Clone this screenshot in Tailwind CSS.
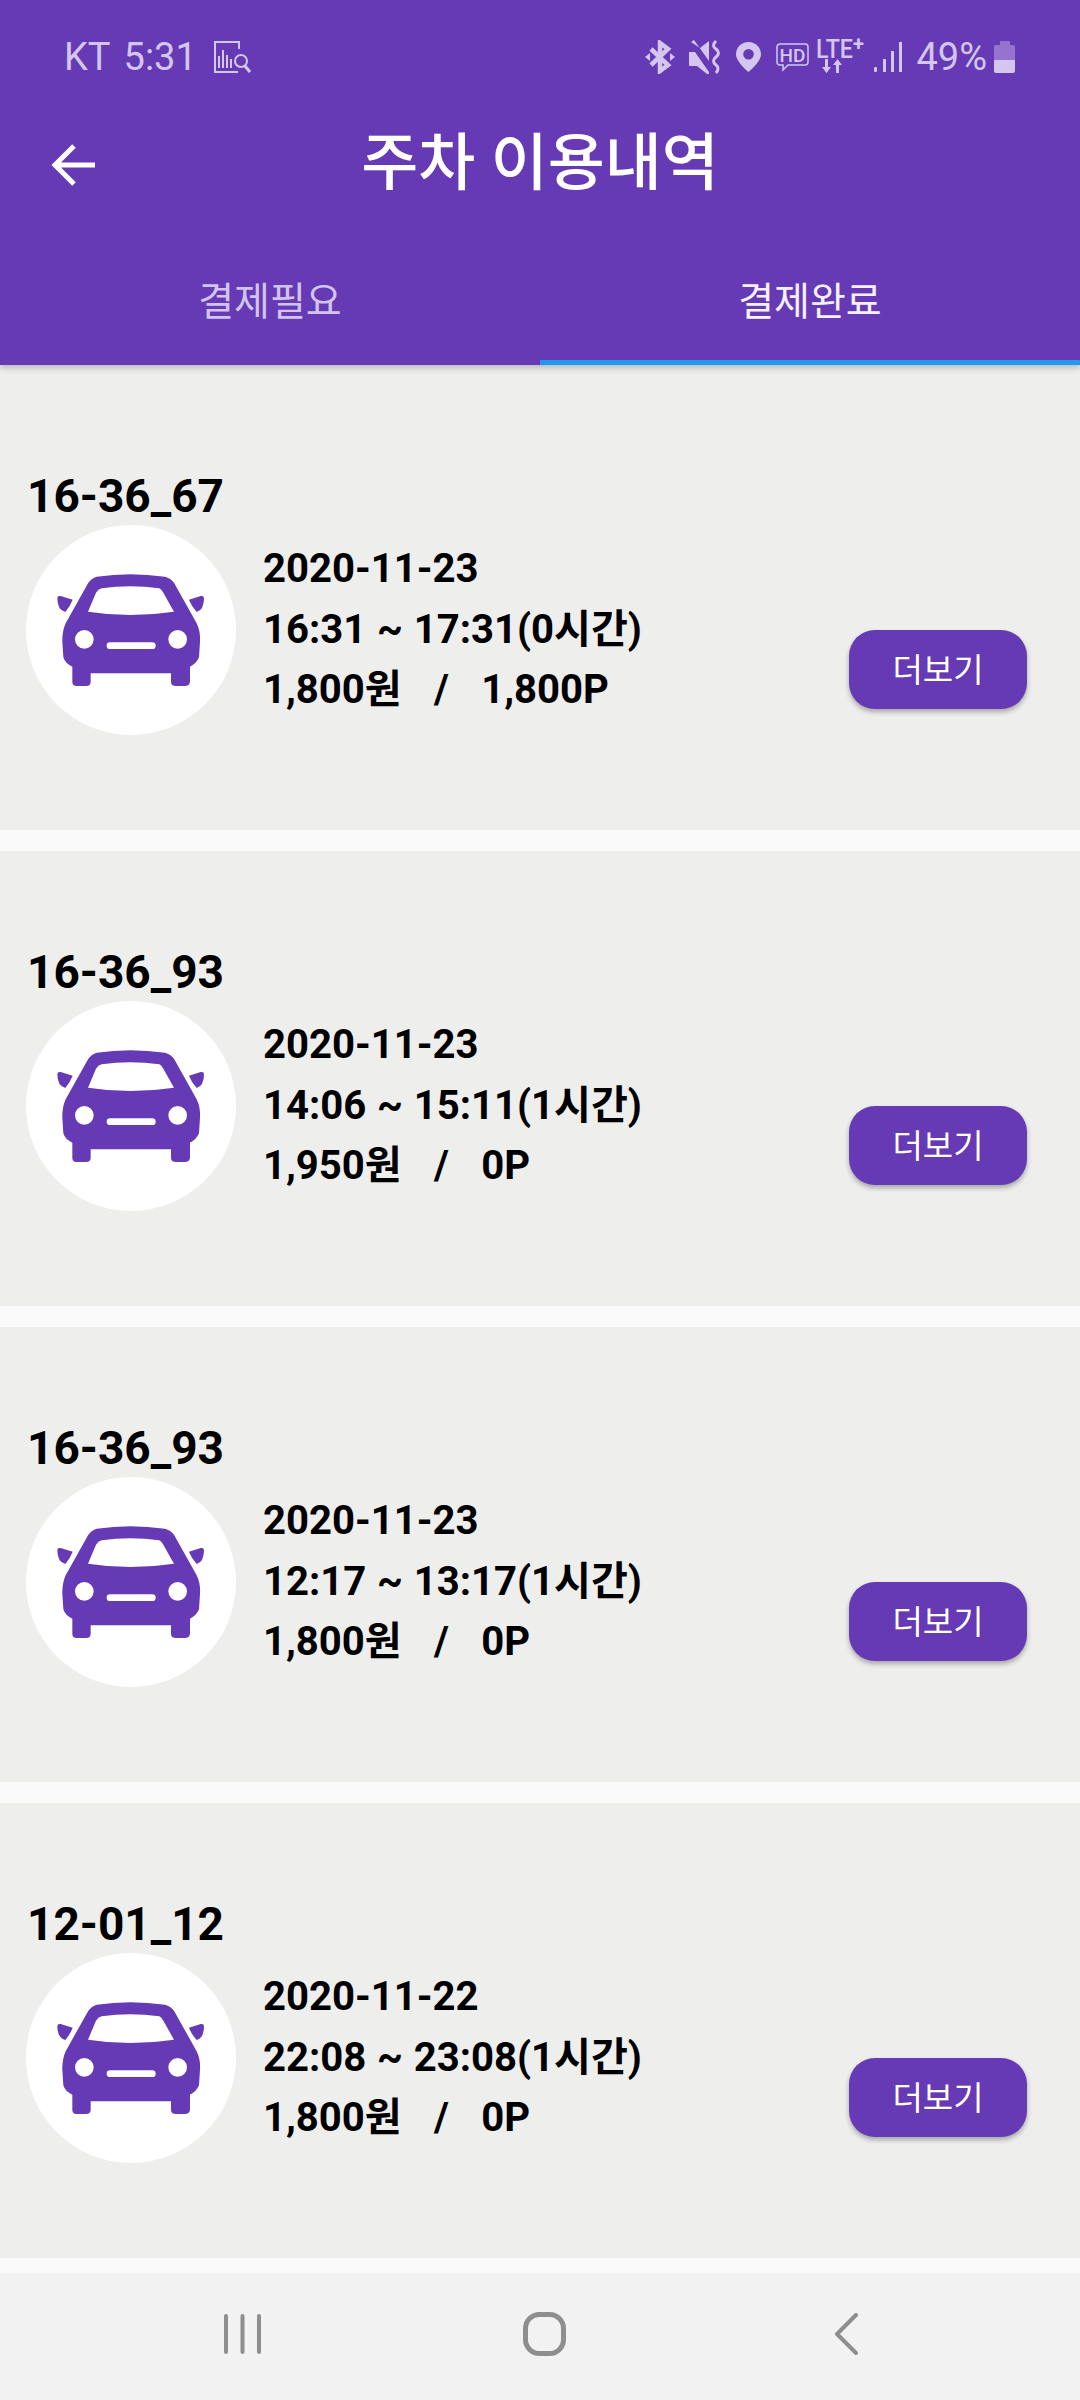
<!DOCTYPE html>
<html lang="ko">
<head>
<meta charset="utf-8">
<script src="https://cdn.jsdelivr.net/npm/@tailwindcss/browser@4"></script>
</head>
<body class="m-0">
<div class="w-[1080px] h-[2400px] flex flex-col overflow-hidden bg-[#fafafa] font-['Roboto','Noto_Sans_CJK_KR',sans-serif]">
  <!-- header -->
  <header class="relative z-10 h-[365px] shrink-0 flex flex-col bg-[#653ab4] shadow-[0_3px_6px_rgba(0,0,0,0.22)]">
    <div class="h-[84px] pt-[30px] pl-[64px] pr-[65px] flex items-center text-[#d4c6ef] text-[38px] leading-none">
      <span>KT</span>
      <span class="ml-[13px]">5:31</span>
      <svg class="ml-[17px] w-[37px] h-[32px]" viewBox="0 0 37 32" fill="none" stroke="currentColor" stroke-width="2"><path d="M25 8V1H1V31H24"/><path d="M5 27V15M9 27V9M13 27V14M17 27V18"/><circle cx="27" cy="20" r="6"/><path d="M31 25l5 6" stroke-width="3"/></svg>
      <svg class="ml-auto w-[30px] h-[34px]" viewBox="0 0 30 34" fill="none" stroke="currentColor" stroke-width="4.500"><path d="M6 9L23 25L15 31V3L23 9L6 25"/><path d="M0 17l5-4v8zM30 17l-5-4v8z" fill="currentColor" stroke="none"/></svg>
      <svg class="ml-[14px] w-[32px] h-[34px]" viewBox="0 0 32 34" fill="currentColor"><path d="M0 12h6l14 20v2h-2l-10-8H1a1 1 0 0 1-1-1zM2 2l3-2 15 21v-20l-9 7z"/><path d="M27 1q-5 5 0 8q5 4 0 8q-5 4 0 8q4 3 0 8" fill="none" stroke="currentColor" stroke-width="3"/></svg>
      <svg class="ml-[15px] w-[25px] h-[30px]" viewBox="0 0 25 30" fill="currentColor"><path fill-rule="evenodd" d="M12.500 0C5.600 0 0 5.400 0 12.200C0 20 12.500 30 12.500 30S25 20 25 12.200C25 5.400 19.400 0 12.500 0zM12.500 7a5.300 5.300 0 1 1 0 10.600a5.300 5.300 0 0 1 0-10.600z"/></svg>
      <svg class="ml-[15px] w-[33px] h-[28px] overflow-visible" viewBox="0 0 33 28" fill="none" stroke="currentColor" stroke-width="1.500"><path d="M4 1H29a3 3 0 0 1 3 3V19a3 3 0 0 1-3 3H12L7 27V22H4a3 3 0 0 1-3-3V4a3 3 0 0 1 3-3z"/><text x="16.500" y="18.500" text-anchor="middle" font-size="19" font-weight="500" fill="currentColor" stroke="none">HD</text></svg>
      <svg class="ml-[7px] w-[50px] h-[36px] overflow-visible" viewBox="0 0 50 36" fill="currentColor"><text x="0" y="19" font-size="25" font-weight="500" textLength="37" lengthAdjust="spacingAndGlyphs">LTE</text><text x="37" y="12" font-size="20" font-weight="700">+</text><path d="M9 20h3v8h3l-4.500 6-4.500-6h3zM20 34h3v-8h3l-4.500-6-4.500 6h3z"/></svg>
      <svg class="ml-[8px] w-[28px] h-[30px]" viewBox="0 0 28 30" fill="currentColor"><rect x="0" y="25" width="3" height="5" rx="1"/><rect x="9" y="17" width="3" height="13"/><rect x="17" y="9" width="3" height="21"/><rect x="25" y="0" width="3" height="30"/></svg>
      <span class="ml-[14px]">49%</span>
      <div class="ml-[7px] w-[21px] h-[32px] flex flex-col items-center">
        <div class="w-[10px] h-[4px] rounded-t-[1px] bg-[#9573cf]"></div>
        <div class="w-full h-[15px] bg-[#9573cf] rounded-t-[2px]"></div>
        <div class="w-full h-[13px] bg-[#d4c6ef] rounded-b-[2px]"></div>
      </div>
    </div>
    <div class="h-[162px] pb-[2px] grid grid-cols-[1fr_auto_1fr] items-center">
      <svg class="ml-[51px] mt-[2px] w-[46px] h-[44px]" viewBox="0 0 46 44" fill="none" stroke="#ffffff" stroke-width="5"><path d="M44 22H4M23 3L4 22L23 41"/></svg>
      <h1 class="m-0 text-[62px] leading-none font-medium text-white whitespace-nowrap">주차 이용내역</h1>
      <div></div>
    </div>
    <div class="h-[119px] grid grid-cols-2 text-[39px] leading-none">
      <div class="flex items-center justify-center pb-[7px] text-[#d2c4ee]">결제필요</div>
      <div class="flex items-center justify-center pb-[2px] border-b-[5px] border-[#2196f3] text-[#f5f1fb]">결제완료</div>
    </div>
  </header>
  <!-- list -->
  <main class="flex-1 min-h-0 pt-[10px] bg-[#eeeeed] flex flex-col overflow-hidden">
    <!-- card 1 -->
    <section class="h-[455px] shrink-0 bg-[#eeeeed] pl-[26px] pr-[53px] pt-[93px]">
      <div class="pl-[1px] h-[57px] text-[46px] leading-[57px] font-bold text-black">16-36_67</div>
      <div class="flex">
        <div class="w-[210px] h-[210px] rounded-full bg-white flex items-center justify-center shrink-0">
          <svg class="w-[210px] h-[210px]" viewBox="78 225 630 630" fill="#653ab4"><path fill-rule="evenodd" d="M290 380Q390 365 495 380Q512 384 522 398L590 520Q602 545 600 575L597 622Q590 640 570 650V695Q568 708 555 708H528Q513 708 513 695V670H272V695Q272 708 258 708H230Q217 708 217 695V650Q195 640 190 622L187 575Q186 545 197 520L265 398Q275 384 290 380ZM305 415Q294 418 288 428L264 485Q390 505 522 485L490 428Q484 418 478 415Q390 402 305 415ZM253 540A28 28 0 1 0 253 596A28 28 0 1 0 253 540ZM533 540A28 28 0 1 0 533 596A28 28 0 1 0 533 540ZM330 577A10 10 0 0 0 330 597H457A10 10 0 0 0 457 577Z"/><path d="M172 445Q172 436 182 438L218 449Q210 470 196 486Q172 480 172 445ZM612 445Q612 436 602 438L567 449Q575 470 590 486Q612 480 612 445Z"/></svg>
        </div>
        <div class="ml-[27px] pt-[14px] text-[40.100px] leading-[60px] font-bold text-black [word-spacing:0.800px]">
          <div>2020-11-23</div>
          <div class="mt-[0.500px]">16:31 ~ 17:31(0시간)</div>
          <div class="mt-[0.500px] whitespace-pre">1,800원   /   1,800P</div>
        </div>
        <button class="ml-auto mt-[105px] w-[178px] h-[79px] pt-[2px] rounded-[26px] bg-[#653ab4] text-white text-[33px] shadow-[0_3px_5px_rgba(0,0,0,0.3)]">더보기</button>
      </div>
    </section>
    <div class="h-[21px] shrink-0 bg-[#fafafa]"></div>
    <!-- card 2 -->
    <section class="h-[455px] shrink-0 bg-[#eeeeed] pl-[26px] pr-[53px] pt-[93px]">
      <div class="pl-[1px] h-[57px] text-[46px] leading-[57px] font-bold text-black">16-36_93</div>
      <div class="flex">
        <div class="w-[210px] h-[210px] rounded-full bg-white flex items-center justify-center shrink-0">
          <svg class="w-[210px] h-[210px]" viewBox="78 225 630 630" fill="#653ab4"><path fill-rule="evenodd" d="M290 380Q390 365 495 380Q512 384 522 398L590 520Q602 545 600 575L597 622Q590 640 570 650V695Q568 708 555 708H528Q513 708 513 695V670H272V695Q272 708 258 708H230Q217 708 217 695V650Q195 640 190 622L187 575Q186 545 197 520L265 398Q275 384 290 380ZM305 415Q294 418 288 428L264 485Q390 505 522 485L490 428Q484 418 478 415Q390 402 305 415ZM253 540A28 28 0 1 0 253 596A28 28 0 1 0 253 540ZM533 540A28 28 0 1 0 533 596A28 28 0 1 0 533 540ZM330 577A10 10 0 0 0 330 597H457A10 10 0 0 0 457 577Z"/><path d="M172 445Q172 436 182 438L218 449Q210 470 196 486Q172 480 172 445ZM612 445Q612 436 602 438L567 449Q575 470 590 486Q612 480 612 445Z"/></svg>
        </div>
        <div class="ml-[27px] pt-[14px] text-[40.100px] leading-[60px] font-bold text-black [word-spacing:0.800px]">
          <div>2020-11-23</div>
          <div class="mt-[0.500px]">14:06 ~ 15:11(1시간)</div>
          <div class="mt-[0.500px] whitespace-pre">1,950원   /   0P</div>
        </div>
        <button class="ml-auto mt-[105px] w-[178px] h-[79px] pt-[2px] rounded-[26px] bg-[#653ab4] text-white text-[33px] shadow-[0_3px_5px_rgba(0,0,0,0.3)]">더보기</button>
      </div>
    </section>
    <div class="h-[21px] shrink-0 bg-[#fafafa]"></div>
    <!-- card 3 -->
    <section class="h-[455px] shrink-0 bg-[#eeeeed] pl-[26px] pr-[53px] pt-[93px]">
      <div class="pl-[1px] h-[57px] text-[46px] leading-[57px] font-bold text-black">16-36_93</div>
      <div class="flex">
        <div class="w-[210px] h-[210px] rounded-full bg-white flex items-center justify-center shrink-0">
          <svg class="w-[210px] h-[210px]" viewBox="78 225 630 630" fill="#653ab4"><path fill-rule="evenodd" d="M290 380Q390 365 495 380Q512 384 522 398L590 520Q602 545 600 575L597 622Q590 640 570 650V695Q568 708 555 708H528Q513 708 513 695V670H272V695Q272 708 258 708H230Q217 708 217 695V650Q195 640 190 622L187 575Q186 545 197 520L265 398Q275 384 290 380ZM305 415Q294 418 288 428L264 485Q390 505 522 485L490 428Q484 418 478 415Q390 402 305 415ZM253 540A28 28 0 1 0 253 596A28 28 0 1 0 253 540ZM533 540A28 28 0 1 0 533 596A28 28 0 1 0 533 540ZM330 577A10 10 0 0 0 330 597H457A10 10 0 0 0 457 577Z"/><path d="M172 445Q172 436 182 438L218 449Q210 470 196 486Q172 480 172 445ZM612 445Q612 436 602 438L567 449Q575 470 590 486Q612 480 612 445Z"/></svg>
        </div>
        <div class="ml-[27px] pt-[14px] text-[40.100px] leading-[60px] font-bold text-black [word-spacing:0.800px]">
          <div>2020-11-23</div>
          <div class="mt-[0.500px]">12:17 ~ 13:17(1시간)</div>
          <div class="mt-[0.500px] whitespace-pre">1,800원   /   0P</div>
        </div>
        <button class="ml-auto mt-[105px] w-[178px] h-[79px] pt-[2px] rounded-[26px] bg-[#653ab4] text-white text-[33px] shadow-[0_3px_5px_rgba(0,0,0,0.3)]">더보기</button>
      </div>
    </section>
    <div class="h-[21px] shrink-0 bg-[#fafafa]"></div>
    <!-- card 4 -->
    <section class="h-[455px] shrink-0 bg-[#eeeeed] pl-[26px] pr-[53px] pt-[93px]">
      <div class="pl-[1px] h-[57px] text-[46px] leading-[57px] font-bold text-black">12-01_12</div>
      <div class="flex">
        <div class="w-[210px] h-[210px] rounded-full bg-white flex items-center justify-center shrink-0">
          <svg class="w-[210px] h-[210px]" viewBox="78 225 630 630" fill="#653ab4"><path fill-rule="evenodd" d="M290 380Q390 365 495 380Q512 384 522 398L590 520Q602 545 600 575L597 622Q590 640 570 650V695Q568 708 555 708H528Q513 708 513 695V670H272V695Q272 708 258 708H230Q217 708 217 695V650Q195 640 190 622L187 575Q186 545 197 520L265 398Q275 384 290 380ZM305 415Q294 418 288 428L264 485Q390 505 522 485L490 428Q484 418 478 415Q390 402 305 415ZM253 540A28 28 0 1 0 253 596A28 28 0 1 0 253 540ZM533 540A28 28 0 1 0 533 596A28 28 0 1 0 533 540ZM330 577A10 10 0 0 0 330 597H457A10 10 0 0 0 457 577Z"/><path d="M172 445Q172 436 182 438L218 449Q210 470 196 486Q172 480 172 445ZM612 445Q612 436 602 438L567 449Q575 470 590 486Q612 480 612 445Z"/></svg>
        </div>
        <div class="ml-[27px] pt-[14px] text-[40.100px] leading-[60px] font-bold text-black [word-spacing:0.800px]">
          <div>2020-11-22</div>
          <div class="mt-[0.500px]">22:08 ~ 23:08(1시간)</div>
          <div class="mt-[0.500px] whitespace-pre">1,800원   /   0P</div>
        </div>
        <button class="ml-auto mt-[105px] w-[178px] h-[79px] pt-[2px] rounded-[26px] bg-[#653ab4] text-white text-[33px] shadow-[0_3px_5px_rgba(0,0,0,0.3)]">더보기</button>
      </div>
    </section>
    <div class="h-[16px] shrink-0 bg-[#fafafa]"></div>
  </main>
  <!-- nav -->
  <nav class="h-[127px] shrink-0 bg-[#f2f2f2]">
    <div class="h-full grid grid-cols-3 items-center pb-[6px]">
      <svg class="ml-[223px] w-[38px] h-[42px]" viewBox="0 0 38 42" fill="none" stroke="#8e8e8e" stroke-width="4" stroke-linecap="round"><path d="M3 3V39M19.500 3V39M36 3V39"/></svg>
      <svg class="ml-[163px] w-[43px] h-[44px]" viewBox="0 0 43 44" fill="none" stroke="#8e8e8e" stroke-width="5"><rect x="2.500" y="2.500" width="38" height="39" rx="14"/></svg>
      <svg class="ml-[114px] w-[24px] h-[42px]" viewBox="0 0 24 42" fill="none" stroke="#8e8e8e" stroke-width="4" stroke-linecap="round" stroke-linejoin="round"><path d="M22 2L3 21L22 40"/></svg>
    </div>
  </nav>
</div>
</body>
</html>
